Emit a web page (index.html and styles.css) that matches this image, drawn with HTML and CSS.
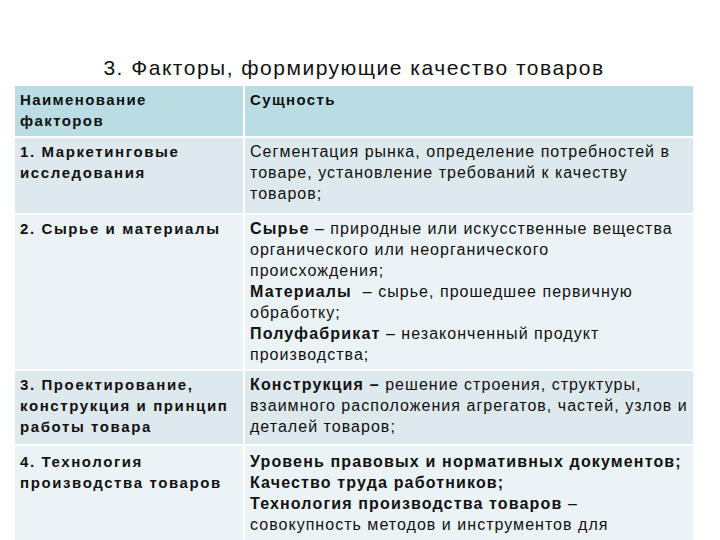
FILE: index.html
```html
<!DOCTYPE html>
<html lang="ru">
<head>
<meta charset="utf-8">
<link rel="stylesheet" href="styles.css">
</head>
<body>
<div class="slide">
  <h1 class="title">3. Факторы, формирующие качество товаров</h1>
  <table class="grid">
    <colgroup><col class="c1"><col class="c2"></colgroup>
    <thead>
      <tr class="head">
        <th>Наименование<br>факторов</th>
        <th>Сущность</th>
      </tr>
    </thead>
    <tbody>
      <tr class="odd">
        <td class="name">1. Маркетинговые<br>исследования</td>
        <td>Сегментация рынка, определение потребностей в<br>товаре, установление требований к качеству<br>товаров;</td>
      </tr>
      <tr class="even">
        <td class="name">2. Сырье и материалы</td>
        <td><b>Сырье</b> – природные или искусственные вещества<br>органического или неорганического<br>происхождения;<br><b>Материалы</b> &nbsp;– сырье, прошедшее первичную<br>обработку;<br><b>Полуфабрикат</b> – незаконченный продукт<br>производства;</td>
      </tr>
      <tr class="odd third">
        <td class="name">3. Проектирование,<br>конструкция и принцип<br>работы товара</td>
        <td><b>Конструкция –</b> решение строения, структуры,<br>взаимного расположения агрегатов, частей, узлов и<br>деталей товаров;</td>
      </tr>
      <tr class="even last">
        <td class="name">4. Технология<br>производства товаров</td>
        <td><b>Уровень правовых и нормативных документов;<br>Качество труда работников;<br>Технология производства товаров</b> –<br>совокупность методов и инструментов для</td>
      </tr>
    </tbody>
  </table>
</div>
</body>
</html>
```
FILE: styles.css
```css
html, body {
  margin: 0;
  padding: 0;
  background: #ffffff;
}
.slide {
  width: 720px;
  height: 540px;
  overflow: hidden;
  padding: 0 0 0 13px;
  box-sizing: border-box;
  font-family: "Liberation Sans", Arial, sans-serif;
  color: #111;
}
.title {
  width: 682px;
  margin: 0;
  padding-top: 55px;
  height: 84px;
  box-sizing: border-box;
  text-align: center;
  font-weight: normal;
  font-size: 21px;
  line-height: 26px;
  letter-spacing: 1.5px;
  color: #111;
}
.grid {
  width: 682px;
  border-collapse: collapse;
  table-layout: fixed;
  font-size: 16px;
  line-height: 21px;
  letter-spacing: 1.03px;
}
.c1 { width: 230px; }
.grid th, .grid td {
  text-align: left;
  vertical-align: top;
  padding: 3px 2px 4px 5px;
  border: 2px solid #fff;
  white-space: nowrap;
  overflow: hidden;
}
.odd td { padding-bottom: 9px; }
.third td { padding-bottom: 7px; }
.grid th {
  font-weight: bold;
  height: 43px;
  font-size: 15px;
  letter-spacing: 1.4px;
}
.head th { background: #b9dde2; }
.odd td { background: #dde9ec; }
.even td { background: #ecf3f7; }
.last td { padding-top: 5px; padding-bottom: 30px; }
.name { font-weight: bold; font-size: 15px; letter-spacing: 1.6px; }
.grid b { font-weight: bold; letter-spacing: 1.15px; }
```
